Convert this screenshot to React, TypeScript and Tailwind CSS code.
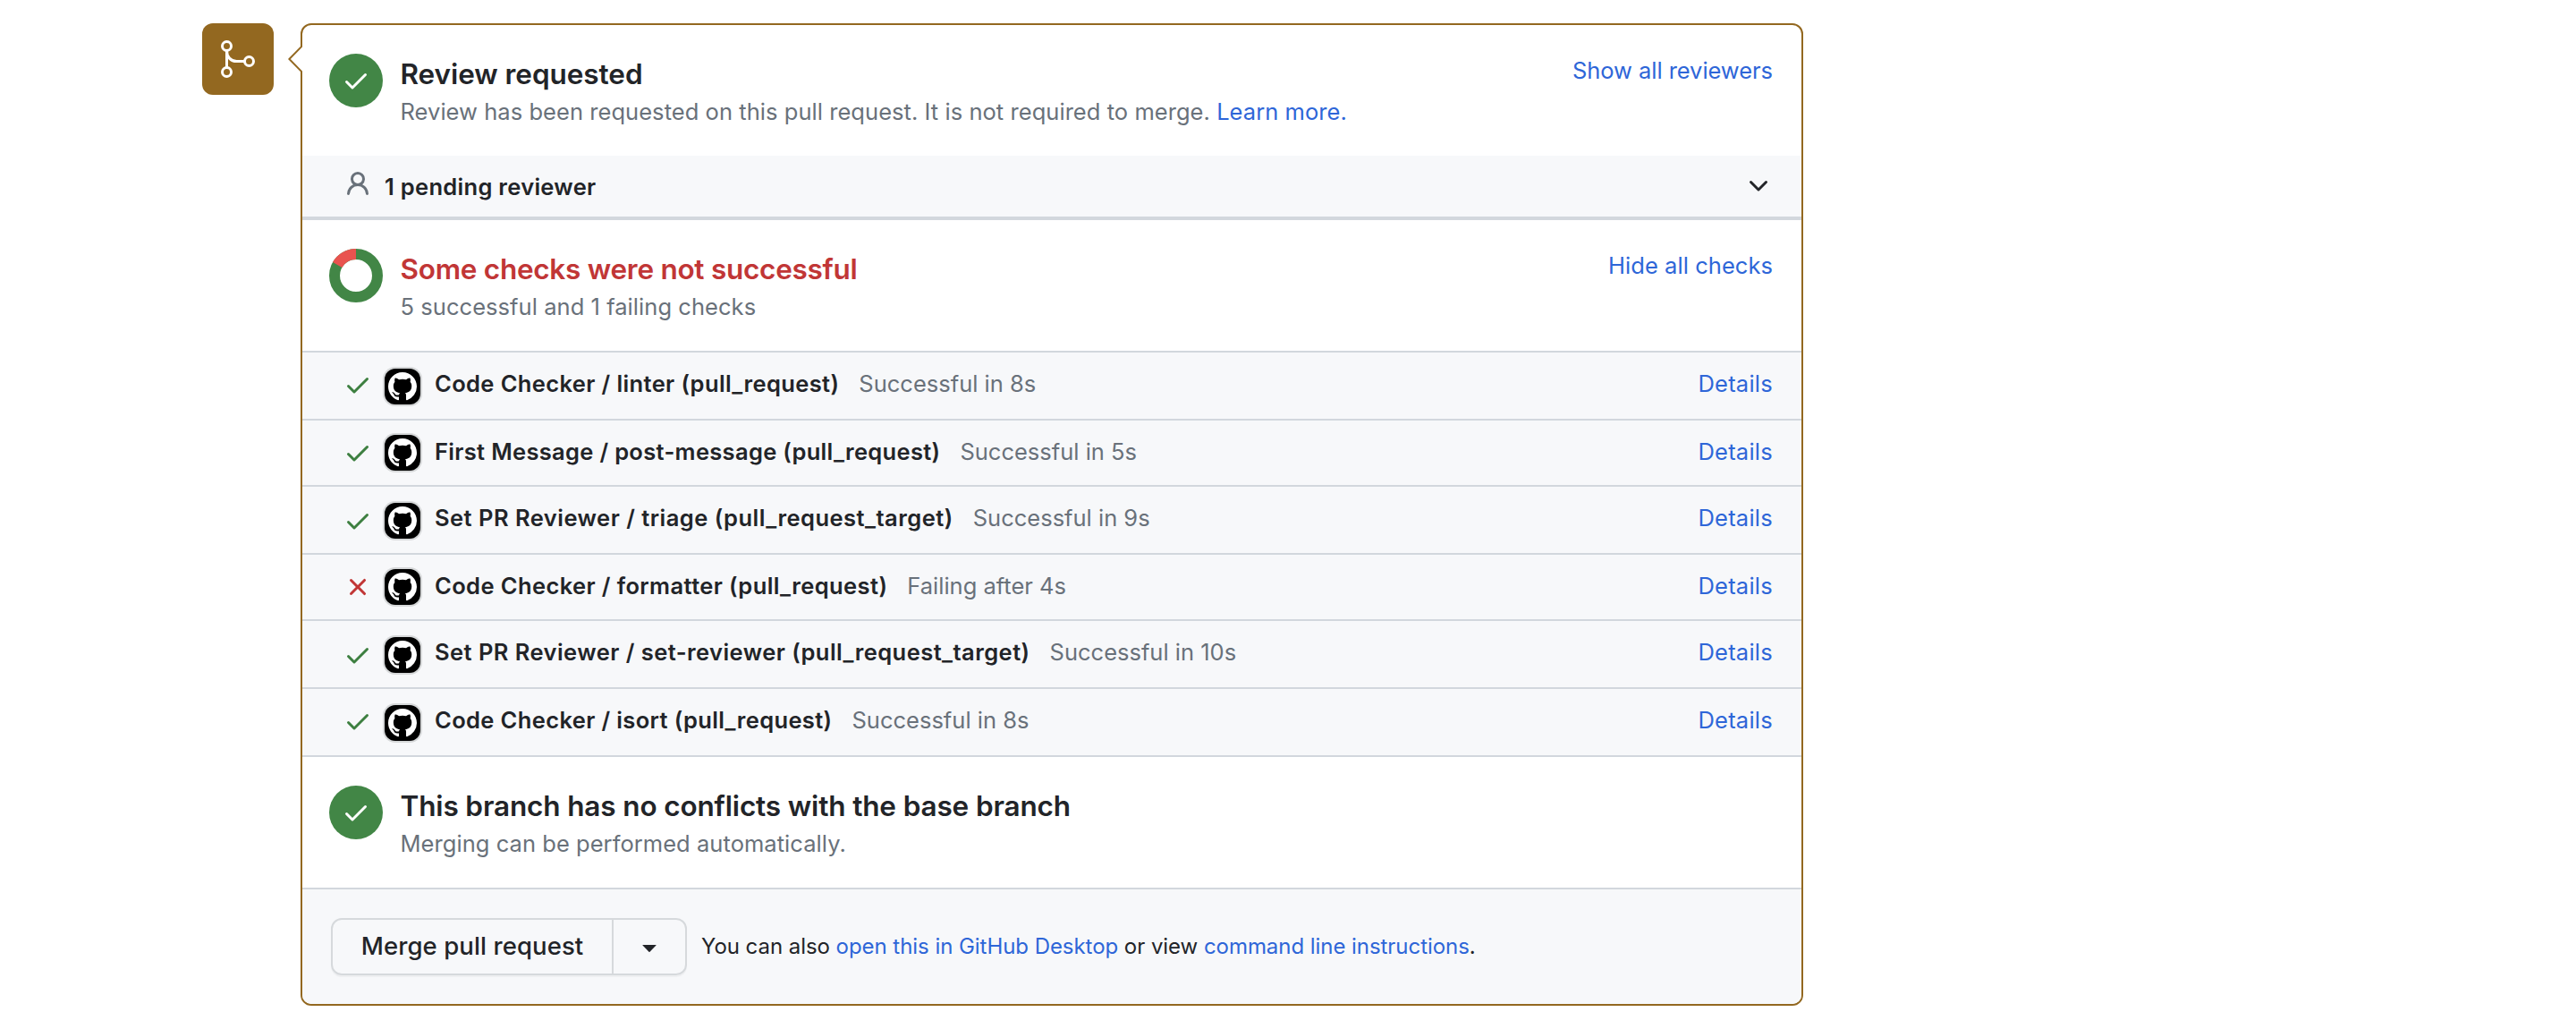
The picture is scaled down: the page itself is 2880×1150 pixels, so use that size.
import type { ReactNode } from "react";

const CHECK =
  "M13.78 4.22a.75.75 0 010 1.06l-7.25 7.25a.75.75 0 01-1.06 0L2.22 9.28a.75.75 0 011.06-1.06L6 10.94l6.72-6.72a.75.75 0 011.06 0z";
const CROSS =
  "M3.72 3.72a.75.75 0 011.06 0L8 6.94l3.22-3.22a.75.75 0 111.06 1.06L9.06 8l3.22 3.22a.75.75 0 11-1.06 1.06L8 9.06l-3.22 3.22a.75.75 0 01-1.06-1.06L6.94 8 3.72 4.78a.75.75 0 010-1.06z";
const PERSON =
  "M10.5 5a2.5 2.5 0 11-5 0 2.5 2.5 0 015 0zm.061 3.073a4 4 0 10-5.123 0 6.004 6.004 0 00-3.431 5.142.75.75 0 001.498.07 4.5 4.5 0 018.99 0 .75.75 0 101.498-.07 6.005 6.005 0 00-3.432-5.142z";
const CHEVRON =
  "M12.78 6.22a.75.75 0 010 1.06l-4.25 4.25a.75.75 0 01-1.06 0L3.22 7.28a.75.75 0 011.06-1.06L8 9.94l3.72-3.72a.75.75 0 011.06 0z";
const GITHUB =
  "M8 0C3.58 0 0 3.58 0 8c0 3.54 2.29 6.53 5.47 7.59.4.07.55-.17.55-.38 0-.19-.01-.82-.01-1.49-2.01.37-2.53-.49-2.69-.94-.09-.23-.48-.94-.82-1.13-.28-.15-.68-.52-.01-.53.63-.01 1.08.58 1.23.82.72 1.21 1.87.87 2.33.66.07-.52.28-.87.51-1.07-1.78-.2-3.64-.89-3.64-3.95 0-.87.31-1.59.82-2.15-.08-.2-.36-1.02.08-2.12 0 0 .67-.21 2.2.82.64-.18 1.32-.27 2-.27.68 0 1.36.09 2 .27 1.53-1.04 2.2-.82 2.2-.82.44 1.1.16 1.92.08 2.12.51.56.82 1.27.82 2.15 0 3.07-1.87 3.75-3.65 3.95.29.25.54.73.54 1.48 0 1.07-.01 1.93-.01 2.2 0 .21.15.46.55.38A8.013 8.013 0 0016 8c0-4.42-3.58-8-8-8z";

function Icon({ d, className = "" }: { d: string; className?: string }) {
  return (
    <svg viewBox="0 0 16 16" fill="currentColor" className={`size-8 shrink-0 ${className}`}>
      <path d={d} />
    </svg>
  );
}

function MergeIcon() {
  return (
    <svg viewBox="0 0 24 24" fill="none" stroke="currentColor" strokeWidth="1.5" className="size-12 text-white">
      <circle cx="5.75" cy="4.75" r="2.5" />
      <circle cx="5.75" cy="19.25" r="2.5" />
      <circle cx="18.25" cy="13.25" r="2.5" />
      <path d="M5.75 7.25v9.5M5.75 7.25c0 3.5 2.2 6 5.5 6h4.5" />
    </svg>
  );
}

function PassedBadge() {
  return (
    <div className="flex size-[60px] shrink-0 justify-center rounded-full bg-[#428646] pt-[14px] text-white">
      <Icon d={CHECK} />
    </div>
  );
}

// Ring of check results: one sixth failing, the rest passing.
function Donut() {
  return (
    <svg viewBox="0 0 60 60" fill="none" strokeWidth="12" className="size-[60px] shrink-0">
      <circle cx="30" cy="30" r="24" stroke="#428646" />
      <path d="M30 6A24 24 0 0 0 9.215 18" stroke="#e9534f" />
    </svg>
  );
}

function Link({ children, className = "" }: { children: ReactNode; className?: string }) {
  return (
    <a href="#" className={`text-[#2e66d8] ${className}`}>
      {children}
    </a>
  );
}

function Section({
  icon,
  title,
  titleClass,
  action,
  children,
}: {
  icon: ReactNode;
  title: string;
  titleClass: string;
  action?: ReactNode;
  children: ReactNode;
}) {
  return (
    <section className="flex h-[146px] items-start pt-8 pr-8 pl-[30px]">
      {icon}
      <div className="ml-[19.5px] flex-1">
        <h3 className={`text-[31.5px] leading-[46px] font-semibold ${titleClass}`}>{title}</h3>
        <p className="leading-[38px] tracking-[0.05px] text-[#69717a]">{children}</p>
      </div>
      {action}
    </section>
  );
}

const checks = [
  { name: "Code Checker / linter (pull_request)", status: "Successful in 8s", ok: true, row: "h-[74px]", icon: "mt-5", avatar: "mt-[18px]", track: "tracking-[0.38px]" },
  { name: "First Message / post-message (pull_request)", status: "Successful in 5s", ok: true, row: "h-[74px] border-t-2", icon: "mt-5", avatar: "mt-4", track: "tracking-[0.32px]" },
  { name: "Set PR Reviewer / triage (pull_request_target)", status: "Successful in 9s", ok: true, row: "h-[76px] border-t-2", icon: "mt-[22px]", avatar: "mt-[18px]", track: "tracking-[0.48px]" },
  { name: "Code Checker / formatter (pull_request)", status: "Failing after 4s", ok: false, row: "h-[74px] border-t-2", icon: "mt-5", avatar: "mt-4", track: "tracking-[0.4px]" },
  { name: "Set PR Reviewer / set-reviewer (pull_request_target)", status: "Successful in 10s", ok: true, row: "h-[76px] border-t-2", icon: "mt-[22px]", avatar: "mt-[18px]", track: "tracking-[0.45px]" },
  { name: "Code Checker / isort (pull_request)", status: "Successful in 8s", ok: true, row: "h-[76px] border-t-2", icon: "mt-5", avatar: "mt-[18px]", track: "tracking-[0.37px]" },
];

export default function App() {
  return (
    <div className="flex h-[1150px] w-[2880px] items-start bg-white pt-[26px] pl-[226px] font-['Inter',sans-serif] text-[25.5px] text-[#222428]">
      <div className="flex size-20 shrink-0 items-center justify-center rounded-xl bg-[#936820]">
        <MergeIcon />
      </div>

      <div className="relative ml-[30px] h-[1098px] w-[1680px] rounded-xl border-2 border-[#936820] bg-white">
        <svg viewBox="0 0 16 30" fill="white" className="absolute top-[23px] left-[-16px] h-[30px] w-4">
          <path d="M16 0.2L1.4 15L16 29.8" stroke="#936820" strokeWidth="2" />
        </svg>

        <div className="overflow-hidden rounded-[10px]">
          <Section
            icon={<PassedBadge />}
            title="Review requested"
            titleClass="tracking-[-0.05px]"
            action={<Link className="leading-[38px] tracking-[-0.05px]">Show all reviewers</Link>}
          >
            Review has been requested on this pull request. It is not required to merge. <Link>Learn more.</Link>
          </Section>

          <div className="flex h-[72px] items-start border-b-4 border-[#d2d7dd] bg-[#f7f8fa] pt-4 pr-8 pl-[46px]">
            <Icon d={PERSON} className="text-[#69717a]" />
            <span className="ml-[14px] flex-1 leading-[38px] font-semibold tracking-[0.3px]">1 pending reviewer</span>
            <Icon d={CHEVRON} />
          </div>

          <Section
            icon={<Donut />}
            title="Some checks were not successful"
            titleClass="tracking-[-0.26px] text-[#c13636]"
            action={<Link className="leading-[38px] tracking-[0.05px]">Hide all checks</Link>}
          >
            5 successful and 1 failing checks
          </Section>

          <div className="border-y-2 border-[#d2d7dd] bg-[#f7f8fa]">
            {checks.map((c) => (
              <div key={c.name} className={`flex items-start border-[#d2d7dd] pr-8 pl-[46px] leading-[38px] ${c.row}`}>
                <Icon
                  d={c.ok ? CHECK : CROSS}
                  className={`${c.icon} ${c.ok ? "text-[#3d7f40]" : "text-[#c13636]"}`}
                />
                <div
                  className={`ml-[14px] flex size-10 shrink-0 items-center justify-center rounded-xl bg-black text-white shadow-[0_0_0_2px_rgba(27,31,36,0.15)] ${c.avatar}`}
                >
                  <Icon d={GITHUB} />
                </div>
                <span className={`mt-4 ml-4 font-semibold ${c.track}`}>{c.name}</span>
                <span className="mt-4 ml-[22px] flex-1 text-[#69717a]">{c.status}</span>
                <Link className="mt-4 tracking-[0.25px]">Details</Link>
              </div>
            ))}
          </div>

          <Section
            icon={<PassedBadge />}
            title="This branch has no conflicts with the base branch"
            titleClass="tracking-[-0.14px]"
          >
            Merging can be performed automatically.
          </Section>

          <div className="flex h-[130px] items-start border-t-2 border-[#d2d7dd] bg-[#f7f8fa] pt-8 pl-8">
            <div className="flex h-16 w-[398px] rounded-xl border-2 border-[#d6d9dc] shadow-[0_2px_0_rgba(27,31,36,0.04)]">
              <button className="w-[314px] border-r-2 border-[#d6d9dc] text-[27.5px] font-medium tracking-[0.1px]">
                Merge pull request
              </button>
              <button className="flex flex-1 items-center justify-center">
                <svg viewBox="0 0 16 8" fill="currentColor" className="mt-1 h-2 w-4">
                  <path d="M.8 0h14.4q.8 0 .3.6L8.5 7.7q-.5.5-1 0L.5.6Q0 0 .8 0z" />
                </svg>
              </button>
            </div>
            <p className="ml-4 text-[24px] leading-[64px] tracking-[-0.05px]">
              You can also <Link>open this in GitHub Desktop</Link> or view <Link>command line instructions</Link>.
            </p>
          </div>
        </div>
      </div>
    </div>
  );
}
